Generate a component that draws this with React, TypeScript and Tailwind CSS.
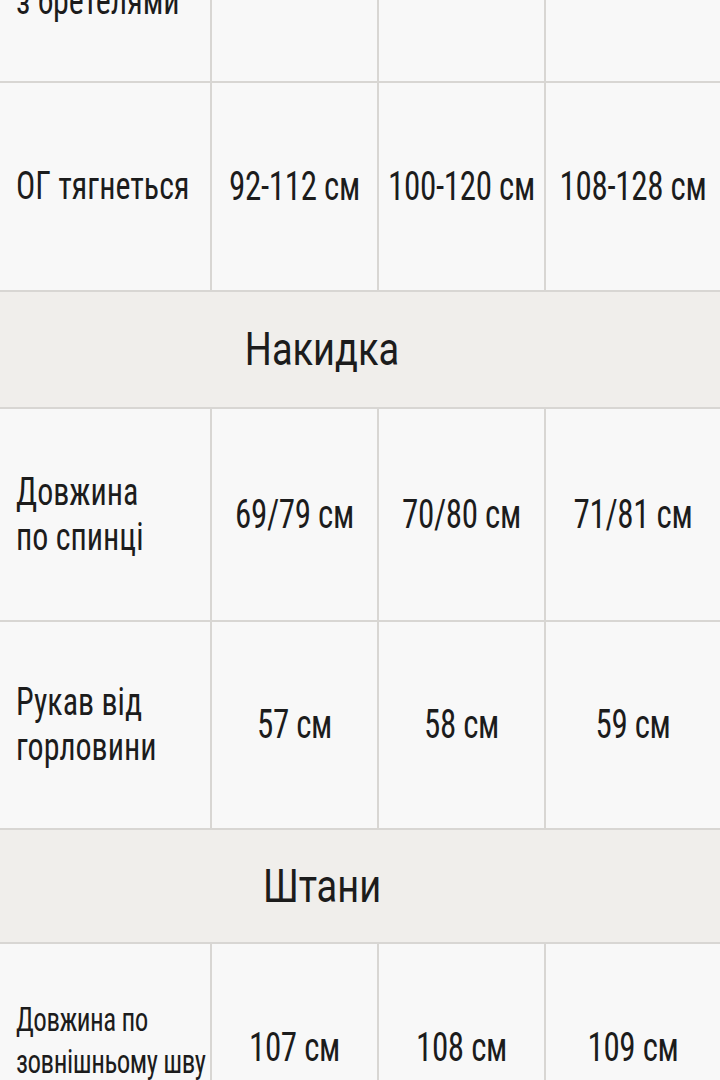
type Row =
  | { kind: "section"; title: string; height: string }
  | { kind: "data"; label: string[]; values: string[]; height: string; small?: boolean };

const rows: Row[] = [
  { kind: "data", label: ["Довжина", "з бретелями"], values: ["", "", ""], height: "h-[207px]" },
  { kind: "data", label: ["ОГ тягнеться"], values: ["92-112 см", "100-120 см", "108-128 см"], height: "h-[209px]" },
  { kind: "section", title: "Накидка", height: "h-[117px]" },
  { kind: "data", label: ["Довжина", "по спинці"], values: ["69/79 см", "70/80 см", "71/81 см"], height: "h-[213px]" },
  { kind: "data", label: ["Рукав від", "горловини"], values: ["57 см", "58 см", "59 см"], height: "h-[208px]" },
  { kind: "section", title: "Штани", height: "h-[114px]" },
  {
    kind: "data",
    label: ["Довжина по", "зовнішньому шву"],
    values: ["107 см", "108 см", "109 см"],
    height: "h-[210px]",
    small: true,
  },
];

const condensed = "font-['Roboto_Condensed',Roboto,'Liberation_Sans',sans-serif] font-stretch-condensed";

function Stretched({ children }: { children: React.ReactNode }) {
  return <span className="inline-block scale-y-[1.22] whitespace-nowrap">{children}</span>;
}

export default function App() {
  return (
    <div className={`h-[1080px] w-[720px] overflow-hidden bg-[#f8f8f8] text-[#1c1c1c] ${condensed}`}>
      <div className="-mt-[124px]">
        {rows.map((row, i) =>
          row.kind === "section" ? (
            <div
              key={i}
              className={`flex items-center justify-center border-b-2 border-[#d8d6d3] bg-[#f0eeeb] pr-[76px] font-['Roboto','Liberation_Sans',sans-serif] font-stretch-normal text-[38px] ${row.height}`}
            >
              <Stretched>{row.title}</Stretched>
            </div>
          ) : (
            <div
              key={i}
              className={`grid grid-cols-[212px_167px_167px_1fr] border-b-2 border-[#d8d6d3] ${row.height}`}
            >
              <div
                className={`flex flex-col justify-center border-r-2 border-[#d8d6d3] pl-4 ${
                  row.small
                    ? "pb-[14px] text-[27px] leading-[42px] tracking-[-0.5px]"
                    : "text-[32px] leading-[45px]"
                }`}
              >
                {row.label.map((line) => (
                  <Stretched key={line}>{line}</Stretched>
                ))}
              </div>
              {row.values.map((value, j) => (
                <div
                  key={j}
                  className={`flex items-center justify-center text-[33px] tracking-[-0.3px] ${
                    j < 2 ? "border-r-2 border-[#d8d6d3]" : ""
                  }`}
                >
                  <Stretched>{value}</Stretched>
                </div>
              ))}
            </div>
          ),
        )}
      </div>
    </div>
  );
}
